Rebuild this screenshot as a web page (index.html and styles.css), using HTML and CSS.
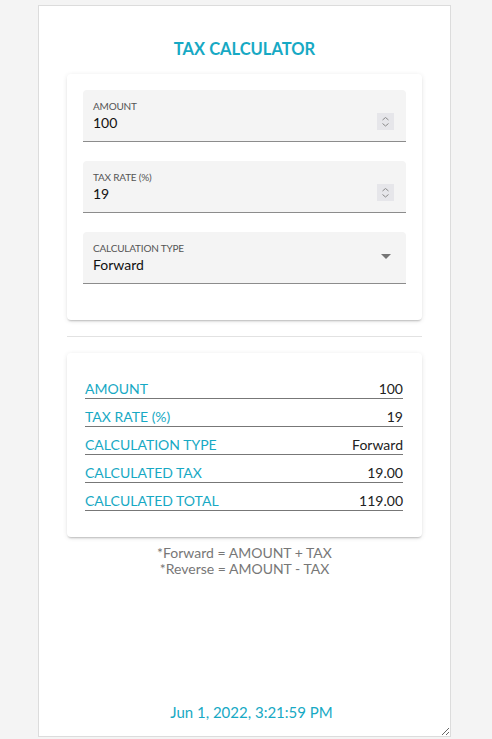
FILE: index.html
```html
<!DOCTYPE html>
<html>
<head>
<meta charset="utf-8">
<link rel="stylesheet" href="styles.css">
</head>
<body>
<div class="app">
  <h1 class="title">TAX CALCULATOR</h1>
  <div class="card form-card">
    <div class="field">
      <div class="field-body">
        <label class="field-label">AMOUNT</label>
        <div class="field-value">100</div>
      </div>
      <div class="spinner">
        <svg width="17" height="17" viewBox="0 0 17 17"><path d="M5.5 7 L8.5 4.5 L11.5 7" fill="none" stroke="#8a8a8a" stroke-width="1"/><path d="M5.5 10.5 L8.5 13 L11.5 10.5" fill="none" stroke="#8a8a8a" stroke-width="1"/></svg>
      </div>
    </div>
    <div class="field">
      <div class="field-body">
        <label class="field-label">TAX RATE (%)</label>
        <div class="field-value">19</div>
      </div>
      <div class="spinner">
        <svg width="17" height="17" viewBox="0 0 17 17"><path d="M5.5 7 L8.5 4.5 L11.5 7" fill="none" stroke="#8a8a8a" stroke-width="1"/><path d="M5.5 10.5 L8.5 13 L11.5 10.5" fill="none" stroke="#8a8a8a" stroke-width="1"/></svg>
      </div>
    </div>
    <div class="field">
      <div class="field-body">
        <label class="field-label">CALCULATION TYPE</label>
        <div class="field-value">Forward</div>
      </div>
      <div class="caret">
        <svg width="10" height="5" viewBox="0 0 10 5"><path d="M0 0 L10 0 L5 5 Z" fill="#757575"/></svg>
      </div>
    </div>
  </div>
  <hr class="divider">
  <div class="card result-card">
    <div class="row"><span class="row-label">AMOUNT</span><span class="row-value">100</span></div>
    <div class="row"><span class="row-label">TAX RATE (%)</span><span class="row-value">19</span></div>
    <div class="row"><span class="row-label">CALCULATION TYPE</span><span class="row-value">Forward</span></div>
    <div class="row"><span class="row-label">CALCULATED TAX</span><span class="row-value">19.00</span></div>
    <div class="row"><span class="row-label">CALCULATED TOTAL</span><span class="row-value">119.00</span></div>
  </div>
  <div class="notes">
    <div>*Forward = AMOUNT + TAX</div>
    <div>*Reverse = AMOUNT - TAX</div>
  </div>
  <div class="spacer"></div>
  <div class="date">Jun 1, 2022, 3:21:59 PM</div>
</div>
</body>
</html>
```
FILE: styles.css
```css
html, body {
  margin: 0;
  padding: 0;
  background: #f4f4f4;
  font-family: Lato, "Noto Sans", sans-serif;
}
body {
  padding-top: 5px;
}
.app {
  box-sizing: border-box;
  width: 413px;
  height: 732px;
  margin-left: 38px;
  background: #fff;
  border: 1px solid #dcdcdc;
  display: flex;
  flex-direction: column;
  padding: 0 28px 14px 28px;
  resize: both;
  overflow: auto;
}
.title {
  margin: 33px 0 0 0;
  text-align: center;
  color: #17a9c4;
  font-size: 16.5px;
  font-weight: 700;
  line-height: 20px;
}
.card {
  background: #fff;
  border-radius: 4px;
  box-shadow: 0 2px 2px -1px rgba(0,0,0,0.22), 0 1px 5px 0 rgba(0,0,0,0.10);
}
.form-card {
  margin-top: 15px;
  padding: 16px 16px 36px 16px;
  display: flex;
  flex-direction: column;
  gap: 19px;
}
.field {
  height: 52px;
  box-sizing: border-box;
  background: #f4f4f4;
  border-radius: 4px 4px 0 0;
  border-bottom: 1px solid #8c8c8c;
  display: flex;
  align-items: center;
  padding: 0 12px 0 10px;
}
.field-body {
  flex: 1;
  display: flex;
  flex-direction: column;
  padding-top: 2px;
}
.field-label {
  font-size: 10px;
  color: #555;
  line-height: 13px;
  letter-spacing: -0.2px;
}
.field-value {
  font-size: 14px;
  color: #111;
  line-height: 20px;
}
.spinner {
  width: 17px;
  height: 17px;
  background: #e6e6ea;
  margin-top: 12px;
  display: flex;
}
.caret {
  display: flex;
  margin-right: 3px;
  margin-top: -2px;
}
.divider {
  border: none;
  border-top: 1px solid #e2e2e2;
  margin: 16px 0 16px 0;
}
.result-card {
  padding: 27px 19px 26px 18px;
  display: flex;
  flex-direction: column;
  gap: 9px;
}
.row {
  display: flex;
  justify-content: space-between;
  align-items: flex-end;
  border-bottom: 1px solid #777;
  line-height: 18px;
  font-size: 14px;
}
.row-label {
  color: #17a9c4;
}
.row-value {
  color: #222;
}
.notes {
  margin-top: 8px;
  text-align: center;
  color: #777;
  font-size: 14px;
  line-height: 16px;
}
.spacer {
  flex: 1;
}
.date {
  text-align: center;
  color: #17a9c4;
  font-size: 15px;
  line-height: 20px;
  padding-left: 14px;
}
```
